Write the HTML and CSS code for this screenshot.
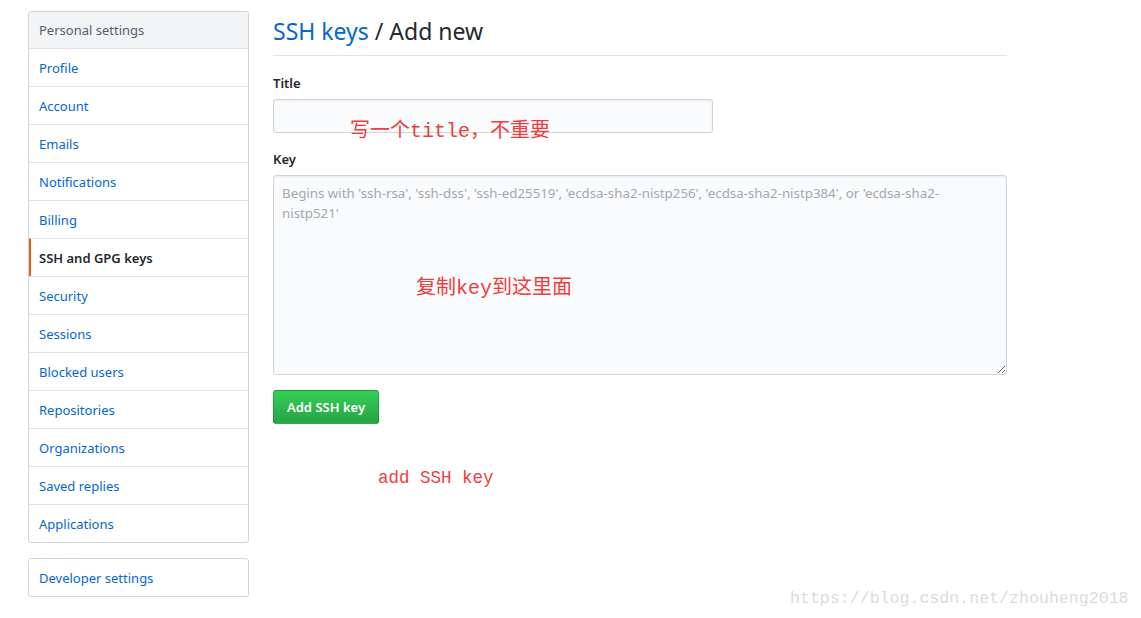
FILE: index.html
```html
<!DOCTYPE html>
<html lang="en">
<head>
  <meta charset="UTF-8">
  <meta name="viewport" content="width=device-width, initial-scale=1.0">
  <title>SSH keys / Add new</title>
  <link rel="stylesheet" href="styles.css">
</head>
<body>
  <div class="page">
    <!-- Sidebar -->
    <div class="sidebar">
      <nav class="menu">
        <div class="menu-heading">Personal settings</div>
        <a class="menu-item" href="#">Profile</a>
        <a class="menu-item" href="#">Account</a>
        <a class="menu-item" href="#">Emails</a>
        <a class="menu-item" href="#">Notifications</a>
        <a class="menu-item" href="#">Billing</a>
        <a class="menu-item selected" href="#">SSH and GPG keys</a>
        <a class="menu-item" href="#">Security</a>
        <a class="menu-item" href="#">Sessions</a>
        <a class="menu-item" href="#">Blocked users</a>
        <a class="menu-item" href="#">Repositories</a>
        <a class="menu-item" href="#">Organizations</a>
        <a class="menu-item" href="#">Saved replies</a>
        <a class="menu-item" href="#">Applications</a>
      </nav>
      <nav class="menu">
        <a class="menu-item first" href="#">Developer settings</a>
      </nav>
    </div>

    <!-- Main -->
    <div class="main">
      <h2 class="subhead"><a href="#">SSH keys</a> / Add new</h2>
      <form class="key-form">
        <label class="field-label" for="title">Title</label>
        <input class="form-control title-input" id="title" type="text">
        <label class="field-label key-label" for="key">Key</label>
        <textarea class="form-control key-input" id="key" placeholder="Begins with 'ssh-rsa', 'ssh-dss', 'ssh-ed25519', 'ecdsa-sha2-nistp256', 'ecdsa-sha2-nistp384', or 'ecdsa-sha2-&#10;nistp521'"></textarea>
        <div><button class="btn-primary" type="button">Add SSH key</button></div>
      </form>

      <!-- annotations -->
      <span class="note note-title">写一个title，不重要</span>
      <span class="note note-key">复制key到这里面</span>
      <span class="note note-btn">add SSH key</span>
    </div>
  </div>

  <div class="watermark">https://blog.csdn.net/zhouheng2018</div>
</body>
</html>
```

FILE: styles.css
```css
body {
  font-family: "Noto Sans", Arial, sans-serif;
  font-size: 13px;
  color: #24292e;
  margin: 0;
  padding: 0;
  background-color: #fff;
}

.page {
  display: flex;
  align-items: flex-start;
  gap: 24px;
  padding: 11px 0 0 28px;
}

/* Sidebar */
.sidebar {
  width: 221px;
  display: flex;
  flex-direction: column;
  gap: 15px;
}

.menu {
  display: flex;
  flex-direction: column;
  border: 1px solid #d1d5da;
  border-radius: 3px;
  overflow: hidden;
}

.menu-heading {
  height: 36px;
  line-height: 37px;
  padding-left: 10px;
  background-color: #f3f4f6;
  color: #586069;
}

.menu-item {
  height: 36px;
  padding-top: 1px;
  line-height: 37px;
  padding-left: 10px;
  border-top: 1px solid #e1e4e8;
  color: #0366d6;
  text-decoration: none;
}

.menu-item.first {
  border-top: none;
}

.menu-item.selected {
  color: #24292e;
  font-weight: 600;
  padding-left: 8px;
  border-left: 2px solid #e36209;
}

/* Main */
.main {
  position: relative;
  width: 734px;
}

.subhead {
  margin: 5px 0 0;
  padding-bottom: 9px;
  border-bottom: 1px solid #e1e4e8;
  font-size: 23px;
  font-weight: normal;
  line-height: 30px;
}

.subhead a {
  color: #0366d6;
  text-decoration: none;
}

.key-form {
  display: flex;
  flex-direction: column;
}

.field-label {
  display: block;
  margin-top: 17px;
  line-height: 20px;
  font-weight: 600;
}

.key-label {
  margin-top: 16px;
}

.form-control {
  box-sizing: border-box;
  margin-top: 6px;
  background-color: #fafbfc;
  border: 1px solid #d1d5da;
  border-radius: 3px;
  box-shadow: inset 0 1px 2px rgba(27, 31, 35, 0.075);
  font-family: "Noto Sans", Arial, sans-serif;
  font-size: 13px;
}

.title-input {
  width: 440px;
  height: 34px;
}

.key-input {
  width: 734px;
  height: 200px;
  padding: 7px 8px;
  font-size: 13.3px;
  line-height: 20px;
  resize: vertical;
}

.key-input::placeholder {
  color: #a3a8ad;
}

.btn-primary {
  margin-top: 15px;
  height: 34px;
  padding: 0 13px;
  color: white;
  font-family: "Noto Sans", Arial, sans-serif;
  font-size: 13px;
  font-weight: 600;
  background-image: linear-gradient(-180deg, #34d058 0%, #28a745 90%);
  border: 1px solid rgba(27, 31, 35, 0.2);
  border-radius: 3px;
}

/* red notes drawn over the screenshot */
.note {
  position: absolute;
  color: #f03c3c;
  font-family: "Liberation Mono", "Noto Sans CJK SC", monospace;
  white-space: nowrap;
}

.note-title {
  left: 77px;
  top: 103px;
  font-size: 20px;
}

.note-key {
  left: 143px;
  top: 260px;
  font-size: 20px;
}

.note-btn {
  left: 105px;
  top: 457px;
  font-size: 17.5px;
}

.watermark {
  position: absolute;
  left: 790px;
  top: 589px;
  color: #dcdcdc;
  font-family: "Liberation Mono", monospace;
  font-size: 16.6px;
}
```
